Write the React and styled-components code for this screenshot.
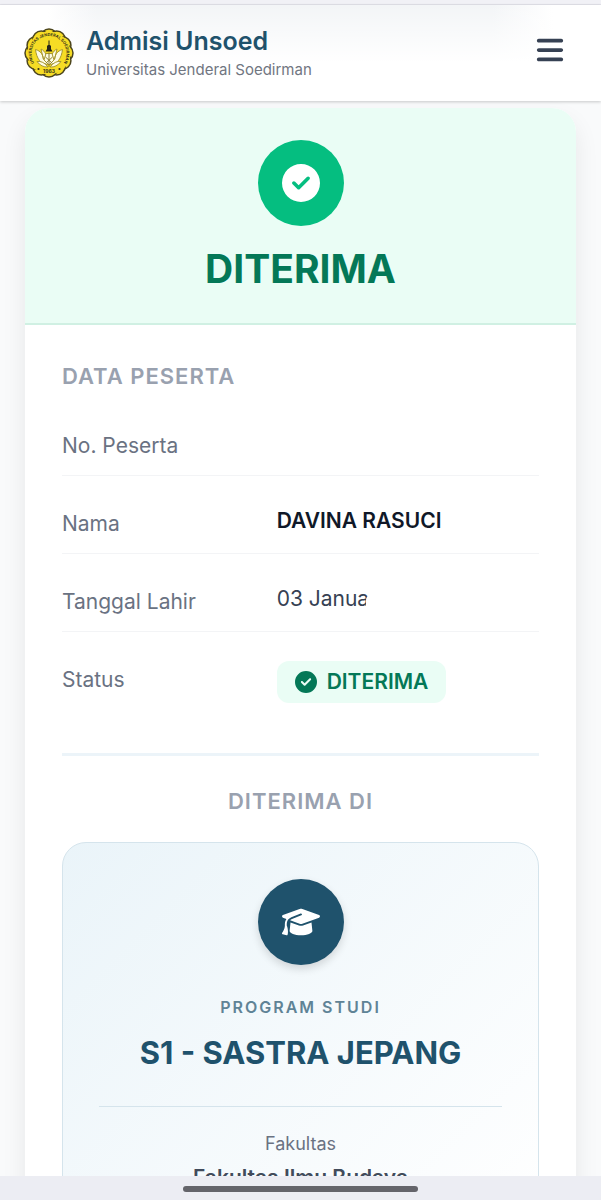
import React from 'react'
import styled, { createGlobalStyle } from 'styled-components'
import { FaBars, FaCircleCheck, FaGraduationCap } from 'react-icons/fa6'

const GlobalStyle = createGlobalStyle`
  * {
    box-sizing: border-box;
  }

  body {
    margin: 0;
    background: #f9fafb;
    font-family: Inter, 'Liberation Sans', sans-serif;
    color: #364153;
  }

  h1, h2, p, dl, dt, dd {
    margin: 0;
  }
`

const Screen = styled.div`
  display: flex;
  flex-direction: column;
  height: 100vh;
  overflow: hidden;
`

const StatusStrip = styled.div`
  flex: none;
  height: 5px;
  background: #f1f1f6;
  border-bottom: 1px solid #e3e3ea;
`

const Header = styled.header`
  position: relative;
  z-index: 1;
  flex: none;
  display: flex;
  align-items: center;
  justify-content: space-between;
  padding: 18px 36px 18px 24px;
  background:
    linear-gradient(to bottom, rgba(255, 255, 255, 0), #ffffff 60%),
    linear-gradient(to right, #ffffff 8%, #f3f5f7 16%, #f3f5f7 82%, #ffffff 92%);
  box-shadow: 0 1px 3px rgba(0, 0, 0, 0.2);
`

const Brand = styled.a`
  display: flex;
  align-items: center;
  gap: 12px;
  color: inherit;
  text-decoration: none;
`

const BrandText = styled.div`
  padding-top: 2px;
`

const BrandName = styled.div`
  font-size: 25px;
  line-height: 32px;
  font-weight: 600;
  color: #1f526c;
`

const BrandSub = styled.div`
  font-size: 15px;
  line-height: 26px;
  color: #717681;
`

const MenuButton = styled.button`
  display: flex;
  padding: 0 0 6px;
  border: 0;
  background: none;
  color: #364153;
  font-size: 30px;
`

const Main = styled.main`
  flex: 1;
  min-height: 0;
  overflow: hidden;
  padding: 7px 25px 0;
`

const Card = styled.article`
  background: #ffffff;
  border-radius: 24px;
  box-shadow: 0 12px 24px rgba(0, 0, 0, 0.08);
  overflow: hidden;
`

const ResultBanner = styled.div`
  display: flex;
  flex-direction: column;
  align-items: center;
  gap: 18px;
  padding: 32px 24px 29px;
  background: #eafdf5;
  border-bottom: 2px solid #d0f0e3;
`

const RoundIcon = styled.div`
  display: flex;
  align-items: center;
  justify-content: center;
  width: 86px;
  height: 86px;
  border-radius: 50%;
  background: ${props => props.color};
  box-shadow: ${props => (props.$raised ? '0 4px 8px rgba(0, 0, 0, 0.14)' : 'none')};
  color: #ffffff;
  font-size: 38px;
`

const ResultTitle = styled.h1`
  font-size: 39px;
  line-height: 50px;
  font-weight: 700;
  color: #047857;
`

const CardBody = styled.div`
  padding: 35px 37px;
`

const SectionTitle = styled.h2`
  font-size: 22px;
  line-height: 32px;
  font-weight: 600;
  letter-spacing: 1px;
  color: #99a1af;
  text-align: ${props => (props.$centered ? 'center' : 'left')};
`

const DataList = styled.dl`
  padding: 6px 0 50px;
  border-bottom: 3px solid #ecf4f9;
`

const DataRow = styled.div`
  display: grid;
  grid-template-columns: 9fr 11fr;
  align-items: start;
  padding: 29px 0 13px;
  border-bottom: 1px solid #f3f4f6;

  &:last-child {
    padding-bottom: 0;
    border-bottom: 0;
  }
`

const DataLabel = styled.dt`
  padding-top: 3px;
  font-size: 21px;
  line-height: 32px;
  color: #6a7282;
`

const DataValue = styled.dd`
  justify-self: start;
  position: relative;
  padding-top: ${props => (props.$flush ? '0' : '3px')};
  font-size: 21px;
  line-height: 26px;
  font-weight: ${props => (props.$strong ? 600 : 400)};
  color: ${props => (props.$strong ? '#101828' : '#364153')};
`

const Smudge = styled.span`
  position: absolute;
  right: -5px;
  bottom: 2px;
  width: 8px;
  height: 14px;
  border-radius: 4px 0 0 4px;
  background: #ffffff;
`

const StatusBadge = styled.span`
  display: flex;
  align-items: center;
  gap: 10px;
  padding: 8px 18px;
  border-radius: 12px;
  background: #eafdf5;
  color: #047857;
  font-weight: 600;

  svg {
    font-size: 22px;
  }
`

const Placement = styled.section`
  display: flex;
  flex-direction: column;
  gap: 25px;
  padding-top: 29px;
`

const ProgramCard = styled.div`
  display: flex;
  flex-direction: column;
  align-items: center;
  padding: 36px 36px;
  border: 1px solid #d5e4ec;
  border-radius: 24px;
  background: linear-gradient(135deg, #eaf4f9, #ffffff);
  text-align: center;
`

const ProgramLabel = styled.p`
  margin-top: 30px;
  font-size: 16px;
  line-height: 24px;
  font-weight: 600;
  letter-spacing: 2px;
  color: #5f8396;
`

const ProgramName = styled.p`
  margin-top: 12px;
  font-size: 31px;
  line-height: 44px;
  font-weight: 700;
  color: #1f526c;
`

const Faculty = styled.div`
  align-self: stretch;
  margin-top: 31px;
  padding-top: 25px;
  border-top: 1px solid #d5e4ec;
`

const FacultyLabel = styled.p`
  font-size: 18px;
  line-height: 24px;
  color: #6a7282;
`

const FacultyName = styled.p`
  margin-top: 6px;
  font-size: 21px;
  line-height: 32px;
  font-weight: 600;
  color: #414b5b;
`

const HomeBar = styled.footer`
  position: relative;
  z-index: 1;
  flex: none;
  display: flex;
  justify-content: center;
  padding: 10px 0 8px;
  background: #ecedf3;

  &::after {
    content: '';
    width: 39%;
    height: 6px;
    border-radius: 3px;
    background: #64646a;
  }
`

const petals = Array.from({ length: 12 }, (_, i) => {
  const angle = (i * Math.PI) / 6
  return { x: 50 + 31 * Math.sin(angle), y: 50 - 31 * Math.cos(angle) }
})

function Seal() {
  return (
    <svg width="50" height="50" viewBox="0 0 100 100" aria-hidden="true">
      <defs>
        <path id="sealArc" d="M 22 72 A 35 35 0 1 1 78 72" />
      </defs>
      {petals.map(p => (
        <circle key={`${p.x}-${p.y}`} cx={p.x} cy={p.y} r="17" fill="#f6dc25" stroke="#4c451d" strokeWidth="3" />
      ))}
      <circle cx="50" cy="50" r="43" fill="#f6dc25" />
      <text fontSize="8" fontWeight="700" fill="#38331a">
        <textPath href="#sealArc" startOffset="50%" textAnchor="middle">
          UNIVERSITAS JENDERAL SOEDIRMAN
        </textPath>
      </text>
      <g fill="#fdfbe4" stroke="#a89830" strokeWidth="2">
        <path d="M47 73 C34 73 25 61 23 43 C34 46 38 54 39 63 L34 42 C43 46 47 57 47 73Z" />
        <path d="M53 73 C66 73 75 61 77 43 C66 46 62 54 61 63 L66 42 C57 46 53 57 53 73Z" />
        <path d="M26 67 Q38 65 48 78 Q35 79 26 67Z M74 67 Q62 65 52 78 Q65 79 74 67Z" />
        <path d="M44 51 h12 l4 13 l-10 10 l-10 -10Z" />
      </g>
      <path d="M50 49 v29 M43 58 l14 13 M57 58 l-14 13" stroke="#8d802c" strokeWidth="2" />
      <path d="M46 36 q4 -6 8 0 v6 l3 5 h-14 l3 -5Z M49 25 h2 v8 h-2Z" fill="#24221a" />
      <circle cx="29" cy="82" r="2.2" fill="#38331a" />
      <circle cx="71" cy="82" r="2.2" fill="#38331a" />
      <text x="50" y="90" fontSize="10" fontWeight="700" textAnchor="middle" fill="#38331a">1963</text>
    </svg>
  )
}

function App() {
  return (
    <Screen>
      <GlobalStyle />
      <StatusStrip />
      <Header>
        <Brand href="#">
          <Seal />
          <BrandText>
            <BrandName>Admisi Unsoed</BrandName>
            <BrandSub>Universitas Jenderal Soedirman</BrandSub>
          </BrandText>
        </Brand>
        <MenuButton type="button" aria-label="Menu">
          <FaBars />
        </MenuButton>
      </Header>

      <Main>
        <Card>
          <ResultBanner>
            <RoundIcon color="#05be80">
              <FaCircleCheck />
            </RoundIcon>
            <ResultTitle>DITERIMA</ResultTitle>
          </ResultBanner>

          <CardBody>
            <SectionTitle>DATA PESERTA</SectionTitle>
            <DataList>
              <DataRow>
                <DataLabel>No. Peserta</DataLabel>
                <DataValue />
              </DataRow>
              <DataRow>
                <DataLabel>Nama</DataLabel>
                <DataValue $strong>DAVINA RASUCI</DataValue>
              </DataRow>
              <DataRow>
                <DataLabel>Tanggal Lahir</DataLabel>
                <DataValue>
                  03 Janua
                  <Smudge />
                </DataValue>
              </DataRow>
              <DataRow>
                <DataLabel>Status</DataLabel>
                <DataValue $flush>
                  <StatusBadge>
                    <FaCircleCheck />
                    DITERIMA
                  </StatusBadge>
                </DataValue>
              </DataRow>
            </DataList>

            <Placement>
              <SectionTitle $centered>DITERIMA DI</SectionTitle>
              <ProgramCard>
                <RoundIcon color="#1f526c" $raised>
                  <FaGraduationCap />
                </RoundIcon>
                <ProgramLabel>PROGRAM STUDI</ProgramLabel>
                <ProgramName>S1 - SASTRA JEPANG</ProgramName>
                <Faculty>
                  <FacultyLabel>Fakultas</FacultyLabel>
                  <FacultyName>Fakultas Ilmu Budaya</FacultyName>
                </Faculty>
              </ProgramCard>
            </Placement>
          </CardBody>
        </Card>
      </Main>
      <HomeBar />
    </Screen>
  )
}

export default App
